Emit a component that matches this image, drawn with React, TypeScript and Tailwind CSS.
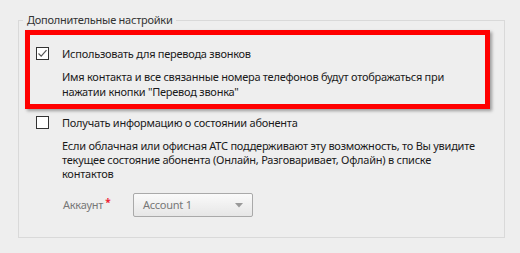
import React from "react";

function CheckBox({ checked }: { checked?: boolean }) {
  return (
    <span className="flex h-[13px] w-[13px] shrink-0 items-center justify-center border border-[#333333] bg-white">
      {checked && (
        <svg width="11" height="11" viewBox="0 0 11 11" fill="none">
          <path d="M1.5 5.5 L4.2 8.2 L9.5 2.2" stroke="#555555" strokeWidth="1.2" />
        </svg>
      )}
    </span>
  );
}

export default function App() {
  return (
    <div
      className="h-[253px] w-[520px] overflow-hidden bg-[#eeeeee] pt-[20px] text-[11px] tracking-[-0.25px] text-[#1a1a1a]"
      style={{ fontFamily: '"Noto Sans", "Open Sans", sans-serif' }}
    >
      <div className="relative ml-[18px] h-[218px] w-[487px] border border-[#d9d9d9]">
        <span className="absolute -top-[9px] left-[4px] bg-[#eeeeee] px-[4px] leading-[16px] text-[#333333]">
          Дополнительные настройки
        </span>

        <div className="ml-[6px] mt-[9px] h-[79px] w-[465px] border-[5px] border-[#ff0000] pl-[6px] pt-[12px] shadow-[2px_2px_3px_rgba(0,0,0,0.35)]">
          <div className="flex items-center gap-[13px]">
            <CheckBox checked />
            <span className="leading-[13px]">Использовать для перевода звонков</span>
          </div>
          <p className="ml-[26px] mt-[9px] whitespace-nowrap leading-[15px]">
            Имя контакта и все связанные номера телефонов будут отображаться при
            <br />
            нажатии кнопки "Перевод звонка"
          </p>
        </div>

        <div className="ml-[17px] mt-[7px]">
          <div className="flex items-center gap-[13px]">
            <CheckBox />
            <span className="leading-[13px]">Получать информацию о состоянии абонента</span>
          </div>
          <p className="ml-[26px] mt-[10px] whitespace-nowrap leading-[14px]">
            Если облачная или офисная АТС поддерживают эту возможность, то Вы увидите
            <br />
            текущее состояние абонента (Онлайн, Разговаривает, Офлайн) в списке
            <br />
            контактов
          </p>

          <div className="ml-[27px] mt-[12px] flex items-center">
            <span className="flex w-[70px] items-start text-[#777777]">
              Аккаунт
              <span className="ml-[2px] text-[10px] font-bold leading-[10px] text-[#ee2233]">*</span>
            </span>
            <div className="flex h-[24px] w-[120px] items-center justify-between rounded-[2px] border border-[#a9a9a9] bg-gradient-to-b from-[#fafafa] to-[#e6e6e6] pl-[9px] pr-[9px] text-[#777777]">
              <span>Account 1</span>
              <svg width="8" height="5" viewBox="0 0 8 5">
                <path d="M0 0 H8 L4 4.5 Z" fill="#999999" />
              </svg>
            </div>
          </div>
        </div>
      </div>
    </div>
  );
}
